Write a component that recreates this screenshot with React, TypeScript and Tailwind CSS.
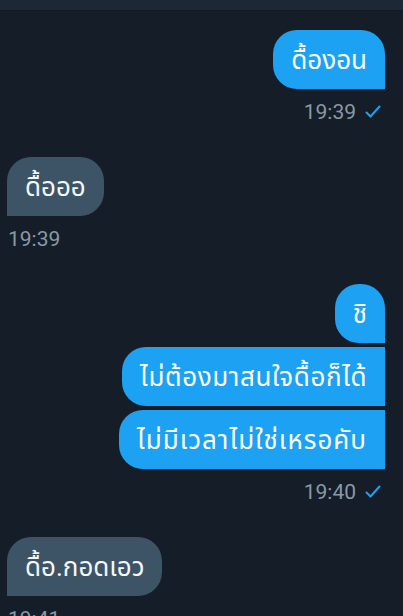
import React from "react";

const Check = () => (
  <svg width="16" height="14" viewBox="0 0 16 14" className="ml-[9px]">
    <path d="M1.5 7.5 L5.5 11.5 L14.5 1.5" fill="none" stroke="#1da1f2" strokeWidth="2" strokeLinecap="round" strokeLinejoin="round" />
  </svg>
);

const Sent = ({ text, cls }: { text: string; cls: string }) => (
  <div className={`h-[59px] flex items-center px-[18px] bg-[#1da1f2] text-white text-[26px] leading-[30px] whitespace-nowrap ${cls}`}>
    {text}
  </div>
);

const Recv = ({ text }: { text: string }) => (
  <div className="h-[59px] flex items-center px-[18px] bg-[#3d5466] text-[#f5f8fa] text-[26px] leading-[30px] whitespace-nowrap rounded-tl-[24px] rounded-tr-[24px] rounded-br-[24px] rounded-bl-none">
    {text}
  </div>
);

const SentTime = ({ t }: { t: string }) => (
  <div className="mt-[11px] h-[24px] flex items-center justify-end pr-[4px] text-[21px] text-[#8899a6] leading-[24px]">
    <span>{t}</span>
    <Check />
  </div>
);

const RecvTime = ({ t }: { t: string }) => (
  <div className="mt-[11px] h-[24px] flex items-center pl-[1px] text-[21px] text-[#8899a6] leading-[24px]">
    <span>{t}</span>
  </div>
);

export default function App() {
  return (
    <div
      className="w-[403px] h-[616px] overflow-hidden bg-[#151e28] flex flex-col"
      style={{ fontFamily: "Roboto, 'Noto Sans', 'Noto Sans Thai', sans-serif" }}
    >
      <div className="h-[11px] shrink-0 bg-[#1c2836] border-b border-[#121a22]" />
      <div className="flex flex-col pl-[7px] pr-[18px] pt-[19px]">
        <div className="flex flex-col items-end">
          <Sent text="ดื้องอน" cls="rounded-tl-[24px] rounded-tr-[24px] rounded-bl-[24px] rounded-br-none" />
        </div>
        <SentTime t="19:39" />

        <div className="mt-[33px] flex flex-col items-start">
          <Recv text="ดื้อออ" />
        </div>
        <RecvTime t="19:39" />

        <div className="mt-[33px] flex flex-col items-end gap-[4px]">
          <Sent text="ชิ" cls="rounded-tl-[24px] rounded-tr-[24px] rounded-bl-[24px] rounded-br-none" />
          <Sent text="ไม่ต้องมาสนใจดื้อก็ได้" cls="rounded-l-[24px] rounded-r-none tracking-[0.6px]" />
          <Sent text="ไม่มีเวลาไม่ใช่เหรอคับ" cls="rounded-l-[24px] rounded-r-none tracking-[1px]" />
        </div>
        <SentTime t="19:40" />

        <div className="mt-[33px] flex flex-col items-start">
          <Recv text="ดื้อ.กอดเอว" />
        </div>
        <RecvTime t="19:41" />
      </div>
    </div>
  );
}
